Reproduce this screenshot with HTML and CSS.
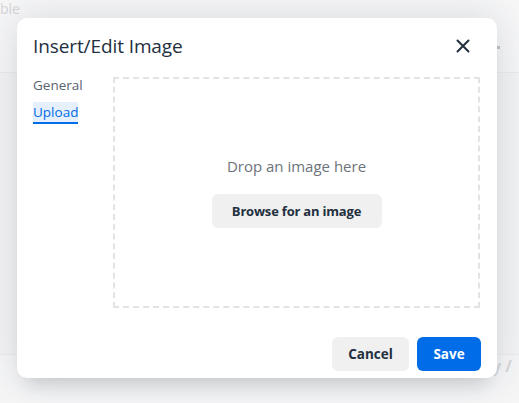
FILE: index.html
```html
<!DOCTYPE html>
<html>
<head>
<meta charset="utf-8">
<link rel="stylesheet" href="styles.css">
</head>
<body>
<div class="page">
  <div class="bg-top"><span class="bg-text">ble</span><span class="bg-dot"></span></div>
  <div class="bg-bottom"><span class="bg-text2">y /</span></div>
  <div class="dialog">
    <div class="header">
      <div class="title">Insert/Edit Image</div>
      <button class="close" aria-label="Close">
        <svg width="14" height="14" viewBox="0 0 14 14"><path d="M1.5 1.5 L12.5 12.5 M12.5 1.5 L1.5 12.5" stroke="#222f3e" stroke-width="2" stroke-linecap="round"/></svg>
      </button>
    </div>
    <div class="body">
      <div class="tabs">
        <div class="tab">General</div>
        <div class="tab active">Upload</div>
      </div>
      <div class="dropzone">
        <div class="drop-text">Drop an image here</div>
        <button class="btn btn-secondary browse">Browse for an image</button>
      </div>
    </div>
    <div class="footer">
      <button class="btn btn-secondary">Cancel</button>
      <button class="btn btn-primary">Save</button>
    </div>
  </div>
</div>
</body>
</html>
```
FILE: styles.css
```css
html, body { margin: 0; padding: 0; }
body {
  width: 519px; height: 403px; overflow: hidden;
  font-family: "Open Sans", "Noto Sans", sans-serif;
  background: #f4f4f5;
}
.page { position: relative; width: 519px; height: 403px; }
.bg-top {
  height: 72px; border-bottom: 1px solid #ececee; background: #f7f7f8;
  position: relative;
}
.bg-text { position: absolute; left: 0; top: 1px; font-size: 14px; line-height: 16px; color: #d6d6da; }
.bg-dot { position: absolute; left: 497px; top: 46px; width: 3px; height: 3px; background: #c4c4c8; }
.bg-bottom { position: absolute; left: 0; right: 0; top: 354px; height: 49px; border-top: 1px solid #ececee; background: #f6f6f7; }
.bg-text2 { position: absolute; left: 492px; top: 0px; font-size: 16px; font-weight: 700; color: #d8d8dc; }
.dialog {
  position: absolute; left: 17px; top: 18px; width: 480px; height: 360px;
  background: #fff; border-radius: 10px;
  box-shadow: 0 16px 16px -10px rgba(34,47,62,0.15), 0 0 40px 1px rgba(34,47,62,0.15);
  display: flex; flex-direction: column; box-sizing: border-box;
}
.header {
  display: flex; align-items: center; justify-content: space-between;
  padding: 11px 16px 0 16px; height: 45px; box-sizing: border-box;
}
.title { font-size: 19px; color: #222f3e; line-height: 26px; letter-spacing: -0.1px; }
.close {
  border: 0; background: transparent; padding: 0; width: 30px; height: 30px;
  display: flex; align-items: center; justify-content: center; margin-right: 3px; margin-top: 0;
}
.body { display: flex; padding: 14px 16px 0 16px; flex: 1; }
.tabs { width: 80px; display: flex; flex-direction: column; gap: 6px; margin-top: -3px; }
.tab { font-size: 13.5px; color: #5a6270; line-height: 22px; align-self: flex-start; }
.tab.active { color: #006ce7; background: #e6f0fc; border-bottom: 2px solid #006ce7; line-height: 20px; }
.dropzone {
  width: 367px; height: 231px; box-sizing: border-box;
  border: 2px dashed #e3e3e3; margin-top: 0;
  display: flex; flex-direction: column; align-items: center; padding-top: 76px;
}
.drop-text { font-size: 15px; color: #6d737b; line-height: 22px; }
.btn {
  font-family: inherit; border: 0; border-radius: 6px; font-weight: 700;
  font-size: 13.5px; height: 34px; padding: 0 12px; cursor: pointer; white-space: nowrap;
}
.btn-secondary { background: #f0f0f0; color: #222f3e; }
.btn-primary { background: #006ce7; color: #fff; }
.browse { margin-top: 17px; width: 170px; font-size: 13px; letter-spacing: -0.2px; }
.footer { display: flex; justify-content: flex-end; gap: 8px; padding: 0 16px 7px 16px; }
.footer .btn-secondary { width: 77px; }
.footer .btn-primary { width: 64px; }
```
